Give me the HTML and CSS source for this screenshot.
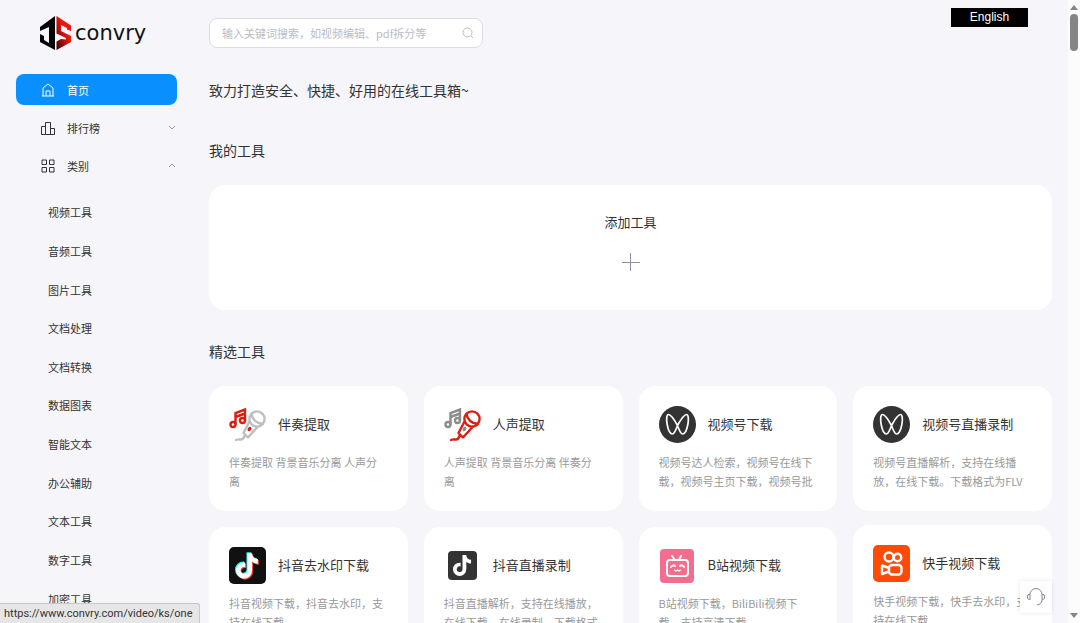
FILE: index.html
```html
<!DOCTYPE html>
<html lang="zh-CN">
<head>
    <meta charset="UTF-8">
    <meta name="viewport" content="width=device-width, initial-scale=1.0">
    <title>convry</title>
    <link rel="stylesheet" href="styles.css">
</head>
<body>
    <!-- shared icons -->
    <svg width="0" height="0" class="sprite" aria-hidden="true">
        <symbol id="mic" viewBox="0 0 37 37">
            <g fill="none" stroke="var(--note)" stroke-width="2.4">
                <circle cx="4" cy="18.500" r="2.500"/>
                <circle cx="13.500" cy="14.500" r="2.500"/>
                <path d="M6.500 18.500V7L16 3.500v11M6.500 11L16 7.500"/>
            </g>
            <g fill="none" stroke="var(--mic)" stroke-width="2.4" stroke-linejoin="round" stroke-linecap="round">
                <circle cx="28" cy="13" r="7.600"/>
                <path d="M22.500 8c1 6 5 9 11 10M20.500 15.500L14.500 27l4.500 4.500 9.500-10.500M16 29c-1 3-2 4.500-4 4.500s-3-0.500-5 0.500"/>
            </g>
            <ellipse cx="20.500" cy="23" rx="1.700" ry="2.400" fill="var(--note)" transform="rotate(35 20.500 23)"/>
        </symbol>
        <symbol id="channels" viewBox="0 0 37 37">
            <circle cx="18.500" cy="18.500" r="18.500" fill="#333"/>
            <path d="M18.500 19.500C15.500 14 12 8.500 9.500 8.500 5.500 8.500 8.500 28 13.500 28c2 0 3.500-4.500 5-8.500C21.500 14 25 8.500 27.500 8.500c4 0 1 19.500-4 19.500-2 0-3.500-4.500-5-8.500z" fill="none" stroke="#fff" stroke-width="1.700"/>
        </symbol>
        <symbol id="note" viewBox="0 0 20 24">
            <path d="M10 1h4c0 3 2 5 5 5v4c-2 0-4-1-5-2v8a7 7 0 1 1-7-7h1v4a3 3 0 1 0 2 3z"/>
        </symbol>
    </svg>

    <div class="app">
        <aside class="sidebar">
            <a href="#" class="logo">
                <svg width="32" height="34" viewBox="0 0 32 34">
                    <defs>
                        <linearGradient id="red" x1="1" y1="0" x2="0" y2="1">
                            <stop offset="0.400" stop-color="#f5140c"/>
                            <stop offset="1" stop-color="#3a0404"/>
                        </linearGradient>
                    </defs>
                    <path d="M0 11L15 0v34L0 26v-8l4 2v4l5 3V11L0 15z" fill="#050505"/>
                    <path d="M16.500 0L31 9.500V15l-4-1.500V12l-6-3v6l10 5v6l-14.500 8v-8.500L21 23l5 0.500v-1.500l-9.500-4.500z" fill="url(#red)"/>
                </svg>
                <span>convry</span>
            </a>
            <nav>
                <a href="#" class="nav-item active">
                    <svg width="14" height="14" viewBox="0 0 14 14"><path d="M2 13V5l5-4 5 4v8M1 13h12M5 13V8h4v5"/></svg>
                    <span>首页</span>
                </a>
                <a href="#" class="nav-item">
                    <svg width="14" height="14" viewBox="0 0 14 14"><path d="M0.500 5.500h4v8h-4zM4.500 1.500h5v12h-5zM9.500 7.500h4v6h-4z"/></svg>
                    <span>排行榜</span>
                    <svg class="arrow" width="8" height="8" viewBox="0 0 8 8"><path d="M1 2l3 3 3-3"/></svg>
                </a>
                <a href="#" class="nav-item">
                    <svg width="14" height="14" viewBox="0 0 14 14"><path d="M1 1h4.500v4.500H1zM8.500 1H13v4.500H8.500zM1 8.500h4.500V13H1zM8.500 8.500H13V13H8.500z"/></svg>
                    <span>类别</span>
                    <svg class="arrow" width="8" height="8" viewBox="0 0 8 8"><path d="M1 5l3-3 3 3"/></svg>
                </a>
                <div class="sub-nav">
                    <a href="#">视频工具</a>
                    <a href="#">音频工具</a>
                    <a href="#">图片工具</a>
                    <a href="#">文档处理</a>
                    <a href="#">文档转换</a>
                    <a href="#">数据图表</a>
                    <a href="#">智能文本</a>
                    <a href="#">办公辅助</a>
                    <a href="#">文本工具</a>
                    <a href="#">数字工具</a>
                    <a href="#">加密工具</a>
                </div>
            </nav>
        </aside>

        <main class="content">
            <header class="topbar">
                <form class="search">
                    <input type="text" aria-label="搜索" placeholder="输入关键词搜索，如视频编辑、pdf拆分等">
                    <svg width="12" height="12" viewBox="0 0 12 12"><circle cx="5.500" cy="5.500" r="4.500"/><path d="M9 9l2 2"/></svg>
                </form>
                <button type="button" class="lang">English</button>
            </header>

            <h1>致力打造安全、快捷、好用的在线工具箱~</h1>

            <h2>我的工具</h2>
            <button type="button" class="add-tool">
                <span>添加工具</span>
                <svg width="18" height="18" viewBox="0 0 18 18"><path d="M0 9.500h18M8.500 0v18"/></svg>
            </button>

            <h2>精选工具</h2>
            <div class="cards">
                <a href="#" class="card">
                    <div class="card-head">
                        <svg class="mic-gray" width="37" height="37"><use href="#mic"/></svg>
                        <h3>伴奏提取</h3>
                    </div>
                    <p>伴奏提取 背景音乐分离 人声分离</p>
                </a>
                <a href="#" class="card">
                    <div class="card-head">
                        <svg class="mic-red" width="37" height="37"><use href="#mic"/></svg>
                        <h3>人声提取</h3>
                    </div>
                    <p>人声提取 背景音乐分离 伴奏分离</p>
                </a>
                <a href="#" class="card">
                    <div class="card-head">
                        <svg width="37" height="37"><use href="#channels"/></svg>
                        <h3>视频号下载</h3>
                    </div>
                    <p>视频号达人检索，视频号在线下载，视频号主页下载，视频号批</p>
                </a>
                <a href="#" class="card">
                    <div class="card-head">
                        <svg width="37" height="37"><use href="#channels"/></svg>
                        <h3>视频号直播录制</h3>
                    </div>
                    <p>视频号直播解析，支持在线播放，在线下载。下载格式为FLV</p>
                </a>
                <a href="#" class="card">
                    <div class="card-head">
                        <svg width="37" height="37" viewBox="0 0 37 37">
                            <rect width="37" height="37" rx="5" fill="#111"/>
                            <use href="#note" x="6" y="4" width="23" height="28" fill="#25f4ee"/>
                            <use href="#note" x="8" y="6" width="23" height="28" fill="#f23b34"/>
                            <use href="#note" x="7" y="5" width="23" height="28" fill="#fff"/>
                        </svg>
                        <h3>抖音去水印下载</h3>
                    </div>
                    <p>抖音视频下载，抖音去水印，支持在线下载</p>
                </a>
                <a href="#" class="card">
                    <div class="card-head">
                        <svg width="37" height="37" viewBox="0 0 37 37">
                            <rect x="4" y="4" width="29" height="29" rx="4" fill="#333"/>
                            <use href="#note" x="9" y="7" width="19" height="23" fill="#fff"/>
                        </svg>
                        <h3>抖音直播录制</h3>
                    </div>
                    <p>抖音直播解析，支持在线播放，在线下载，在线录制，下载格式</p>
                </a>
                <a href="#" class="card">
                    <div class="card-head">
                        <svg width="37" height="37" viewBox="0 0 37 37">
                            <rect x="1" y="2" width="34" height="34" rx="4" fill="#f26d8e"/>
                            <g fill="none" stroke="#fff" stroke-width="2" stroke-linecap="round">
                                <rect x="8" y="13" width="21" height="16" rx="3"/>
                                <path d="M13 9l3 4M22 9l-2 4M12 20c1-2 3-2 4-1M21 19c1-1 3-1 4 1"/>
                                <path d="M15.500 23l1.500 1 1.500-1 1.500 1 1.500-1" stroke-width="1.200"/>
                            </g>
                        </svg>
                        <h3>B站视频下载</h3>
                    </div>
                    <p>B站视频下载，BiliBili视频下载，支持高清下载</p>
                </a>
                <a href="#" class="card hovered">
                    <div class="card-head">
                        <svg width="37" height="37" viewBox="0 0 37 37">
                            <rect width="37" height="37" rx="5" fill="#ff4a08"/>
                            <g fill="none" stroke="#fff" stroke-width="2.400" stroke-linejoin="round">
                                <circle cx="16" cy="12" r="4.500"/>
                                <circle cx="24.500" cy="12.500" r="3.700"/>
                                <rect x="16" y="20" width="12.500" height="9.500" rx="3"/>
                                <path d="M16 23l-7-2.500v8.500l7-2.500"/>
                            </g>
                        </svg>
                        <h3>快手视频下载</h3>
                    </div>
                    <p>快手视频下载，快手去水印，支持在线下载</p>
                </a>
            </div>
        </main>

        <div class="scrollbar">
            <i class="up"></i>
            <i class="thumb"></i>
            <i class="down"></i>
        </div>
    </div>

    <button type="button" class="service" aria-label="客服">
        <svg width="18" height="20" viewBox="0 0 18 20"><path d="M3 13V7.500a6 6 0 0 1 12 0V13c0 3-2 4.500-5 5M3 7.500H2a1.500 1.500 0 0 0-1.500 1.500v2A1.500 1.500 0 0 0 3 12M15 7.500h1A1.500 1.500 0 0 1 17.500 9v2a1.500 1.500 0 0 1-2.500 1"/></svg>
    </button>
    <div class="status">https://www.convry.com/video/ks/one</div>
</body>
</html>
```
FILE: styles.css
```css
* {
    box-sizing: border-box;
}
body {
    margin: 0;
    font-family: "Noto Sans CJK SC", sans-serif;
    font-size: 11px;
    color: #333;
    background-color: #f5f5fa;
}
a {
    color: inherit;
    text-decoration: none;
}
button {
    font-family: inherit;
    border: none;
    padding: 0;
    cursor: pointer;
}
h1, h2, h3, p {
    margin: 0;
    font-weight: 400;
}
.sprite {
    position: absolute;
}
.app {
    display: flex;
    height: 100vh;
    overflow: hidden;
}

/* sidebar */
.sidebar {
    flex: 0 0 193px;
    padding: 16px 16px 0;
}
.logo {
    display: flex;
    gap: 3px;
    height: 34px;
    margin: 0 0 24px 24px;
    color: #111;
    font: 21px/34px "DejaVu Sans", sans-serif;
}
.nav-item {
    display: flex;
    align-items: center;
    height: 31px;
    margin-bottom: 7px;
    padding: 0 1px 0 25px;
    border-radius: 8px;
}
.nav-item svg {
    margin-right: 12px;
    fill: none;
    stroke: #333;
    stroke-width: 1;
}
.nav-item .arrow {
    margin: 0 0 0 auto;
    stroke: #999;
}
.nav-item.active {
    background-color: #0a8fff;
    color: #fff;
}
.nav-item.active svg {
    stroke: #fff;
}
.sub-nav {
    display: grid;
    grid-auto-rows: 1fr;
    align-items: center;
    min-height: 425px;
    margin-top: 12px;
    padding-left: 32px;
}

/* content */
.content {
    flex: 1;
    min-width: 0;
    padding: 18px 16px 0;
}
.topbar {
    display: flex;
    justify-content: space-between;
    height: 30px;
}
.search {
    display: flex;
    align-items: center;
    width: 274px;
    padding: 0 8px 0 12px;
    border: 1px solid #dcdce8;
    border-radius: 8px;
    background-color: #fff;
}
.search input {
    flex: 1;
    min-width: 0;
    padding: 0;
    border: none;
    outline: none;
    background: none;
    font-family: inherit;
    font-size: 11px;
}
.search input::placeholder {
    color: #b8bcc6;
}
.search svg {
    fill: none;
    stroke: #b8bcc6;
}
.lang {
    align-self: flex-start;
    width: 77px;
    height: 19px;
    margin: -10px 24px 0 0;
    background-color: #000;
    color: #fff;
    font: 12px/19px "Liberation Sans", sans-serif;
}
h1, h2 {
    font-size: 14px;
    line-height: 20px;
}
h1 {
    margin: 32px 0 40px;
}
h2 {
    margin-bottom: 25px;
}
.add-tool {
    display: flex;
    flex-direction: column;
    align-items: center;
    gap: 21px;
    width: 100%;
    height: 125px;
    margin-bottom: 31px;
    padding-top: 27px;
    border-radius: 16px;
    background-color: #fff;
    color: #333;
    font-size: 13px;
    line-height: 20px;
}
.add-tool svg {
    stroke: #8c909a;
}
.cards {
    display: grid;
    grid-template-columns: repeat(4, 1fr);
    gap: 16px;
}
.card {
    padding: 20px;
    border-radius: 16px;
    background-color: #fff;
}
.card.hovered {
    transform: translateY(-2px);
}
.card-head {
    display: flex;
    align-items: center;
    gap: 12px;
    margin-bottom: 10px;
}
.card h3 {
    padding-bottom: 2px;
    font-size: 13px;
    line-height: 20px;
}
.card p {
    height: 38px;
    overflow: hidden;
    color: #999;
    line-height: 19px;
}
.mic-gray {
    --note: #dc1e10;
    --mic: #bfbfbf;
}
.mic-red {
    --note: #8c8c8c;
    --mic: #dc1e10;
}

/* window parts */
.scrollbar {
    display: flex;
    flex: 0 0 12px;
    flex-direction: column;
    align-items: center;
    padding: 5px 0;
    background-color: #fcfcfc;
}
.scrollbar .up,
.scrollbar .down {
    border: 4px solid transparent;
    border-top-width: 0;
    border-bottom: 5px solid #858585;
}
.scrollbar .thumb {
    width: 8px;
    height: 37px;
    margin-top: 4px;
    border-radius: 4px;
    background-color: #858585;
}
.scrollbar .down {
    margin-top: auto;
    transform: rotate(180deg);
}
.service {
    position: fixed;
    right: 28px;
    bottom: 10px;
    display: flex;
    align-items: center;
    justify-content: center;
    width: 32px;
    height: 32px;
    border-radius: 2px;
    background-color: #fff;
    box-shadow: 0 0 4px rgba(0, 0, 0, 0.1);
}
.service svg {
    fill: none;
    stroke: #888;
}
.status {
    position: fixed;
    left: 0;
    bottom: 0;
    width: 200px;
    height: 20px;
    padding-left: 4px;
    border: 1px solid #c8c8c8;
    border-width: 1px 1px 0 0;
    border-radius: 0 3px 0 0;
    background-color: #e6e6e6;
    color: #333;
    font: 11px/20px Roboto, sans-serif;
    white-space: nowrap;
}
```
